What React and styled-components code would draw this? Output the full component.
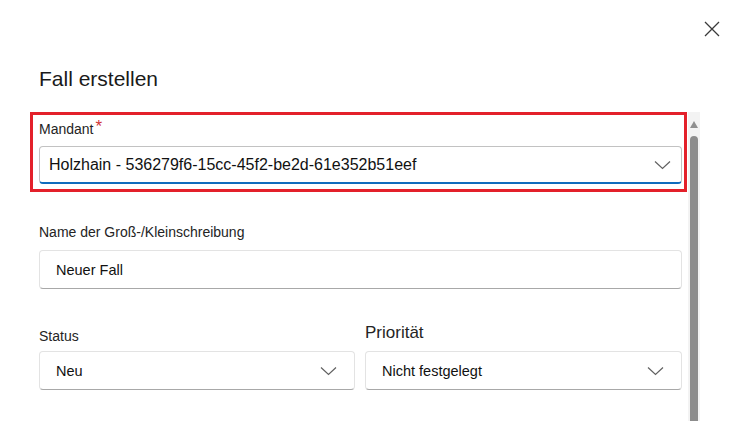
import React from "react";
import styled, { createGlobalStyle } from "styled-components";

const Global = createGlobalStyle`
  html, body { margin: 0; padding: 0; background: #ffffff; }
  body { font-family: "Liberation Sans", Arial, sans-serif; color: #242424; }
  * { box-sizing: border-box; }
`;

const Page = styled.div`
  width: 740px;
  height: 421px;
  overflow: hidden;
  background: #ffffff;
  display: flex;
  flex-direction: column;
`;

const TopBar = styled.div`
  display: flex;
  justify-content: flex-end;
  padding: 21px 20px 0 0;
  height: 38px;
`;

const CloseButton = styled.button`
  width: 16px;
  height: 16px;
  padding: 0;
  border: none;
  background: transparent;
  display: flex;
  align-items: center;
  justify-content: center;
  cursor: pointer;
`;

const Title = styled.h2`
  margin: 28px 0 0 39px;
  font-size: 21px;
  font-weight: 400;
  line-height: 26px;
  color: #1a1a1a;
`;

const Body = styled.div`
  display: flex;
  margin-top: 20px;
  flex: 1;
  min-height: 0;
`;

const Form = styled.div`
  margin-left: 30px;
  width: 657px;
  display: flex;
  flex-direction: column;
`;

const Highlight = styled.div`
  border: 3px solid #e3202a;
  padding: 6px 2px 5px 6px;
`;

const Field = styled.div`
  padding-left: 9px;
  padding-right: 5px;
  margin-top: ${(p) => p.$top || 0}px;
`;

const Row = styled.div`
  display: flex;
  gap: 10px;
  padding-left: 9px;
  padding-right: 5px;
  margin-top: ${(p) => p.$top || 0}px;
  align-items: flex-end;
`;

const Col = styled.div`
  flex: ${(p) => p.$w} 0 ${(p) => p.$w}px;
  display: flex;
  flex-direction: column;
`;

const Label = styled.div`
  font-size: ${(p) => p.$size || 14}px;
  line-height: ${(p) => (p.$size ? 20 : 17)}px;
  color: #242424;
  margin-bottom: ${(p) => p.$gap ?? 9}px;
  display: flex;
  align-items: flex-start;
`;

const Star = styled.span`
  color: #d13438;
  font-size: 17px;
  line-height: 12px;
  margin-left: 2px;
`;

const Box = styled.div`
  height: ${(p) => p.$h || 39}px;
  border: 1px solid ${(p) => (p.$active ? "#c2c2c2" : "#e3e3e3")};
  border-bottom: ${(p) => (p.$active ? "2px solid #0f6cbd" : "1px solid #a8a8a8")};
  border-radius: 4px;
  background: #ffffff;
  display: flex;
  align-items: center;
  justify-content: space-between;
  padding: ${(p) => (p.$active ? "0 10px 0 9px" : "0 17px 0 16px")};
`;

const Value = styled.span`
  font-size: ${(p) => p.$size || 14.5}px;
  color: #111111;
  white-space: nowrap;
`;

const Scrollbar = styled.div`
  margin-left: 1px;
  width: 12px;
  background: #f3f3f3;
  display: flex;
  flex-direction: column;
  align-items: center;
  padding-top: 9px;
`;

const Arrow = styled.div`
  width: 0;
  height: 0;
  border-left: 4.5px solid transparent;
  border-right: 4.5px solid transparent;
  border-bottom: 7px solid #8f8f8f;
`;

const Thumb = styled.div`
  margin-top: 8px;
  width: 8px;
  flex: 1;
  background: #8c8c8c;
  border-radius: 4px 4px 0 0;
`;

const Chevron = () => (
  <svg width="17" height="10" viewBox="0 0 17 10" fill="none">
    <polyline points="1,1.5 8.5,8.5 16,1.5" stroke="#616161" strokeWidth="1.2" />
  </svg>
);

const CloseIcon = () => (
  <svg width="16" height="16" viewBox="0 0 16 16" fill="none">
    <path d="M1 1 L15 15 M15 1 L1 15" stroke="#3a3a3a" strokeWidth="1.3" />
  </svg>
);

export default function App() {
  return (
    <>
      <Global />
      <Page>
        <TopBar>
          <CloseButton aria-label="Schließen">
            <CloseIcon />
          </CloseButton>
        </TopBar>
        <Title>Fall erstellen</Title>
        <Body>
          <Form>
            <Highlight>
              <Label $gap={8}>
                Mandant<Star>*</Star>
              </Label>
              <Box $active $h={38}>
                <Value $size={16}>Holzhain - 536279f6-15cc-45f2-be2d-61e352b51eef</Value>
                <Chevron />
              </Box>
            </Highlight>
            <Field $top={32}>
              <Label>Name der Groß-/Kleinschreibung</Label>
              <Box>
                <Value>Neuer Fall</Value>
              </Box>
            </Field>
            <Row $top={34}>
              <Col $w={316}>
                <Label $gap={6}>Status</Label>
                <Box>
                  <Value>Neu</Value>
                  <Chevron />
                </Box>
              </Col>
              <Col $w={317}>
                <Label $size={17} $gap={8}>Priorität</Label>
                <Box>
                  <Value>Nicht festgelegt</Value>
                  <Chevron />
                </Box>
              </Col>
            </Row>
          </Form>
          <Scrollbar>
            <Arrow />
            <Thumb />
          </Scrollbar>
        </Body>
      </Page>
    </>
  );
}
